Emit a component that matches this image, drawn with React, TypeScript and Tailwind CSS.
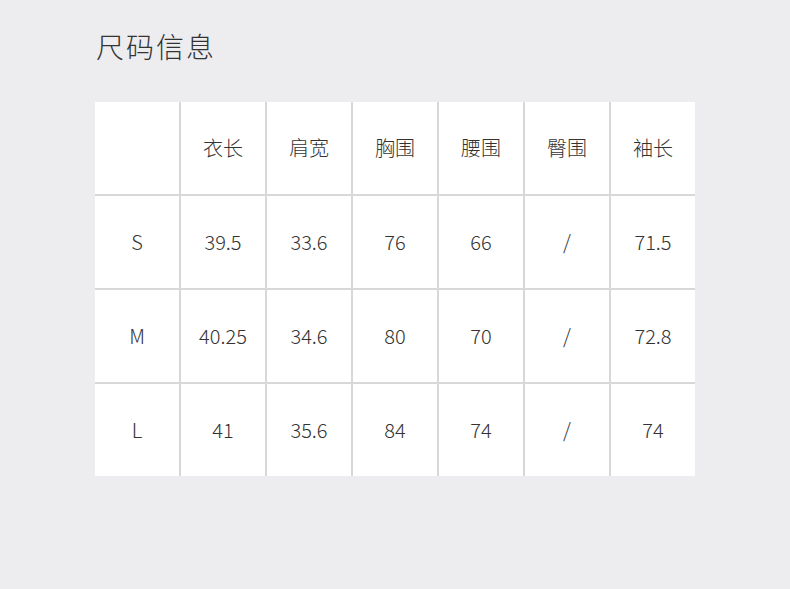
import React from "react";

const headers = ["", "衣长", "肩宽", "胸围", "腰围", "臀围", "袖长"];
const rows = [
  ["S", "39.5", "33.6", "76", "66", "/", "71.5"],
  ["M", "40.25", "34.6", "80", "70", "/", "72.8"],
  ["L", "41", "35.6", "84", "74", "/", "74"],
];

export default function App() {
  const all = [headers, ...rows];
  return (
    <div
      className="w-[790px] h-[589px] bg-[#ededef] text-[#333333]"
      style={{ fontFamily: '"Noto Sans CJK SC", "Noto Sans", sans-serif' }}
    >
      <div className="pl-[96px] pt-[28px]">
        <h1 className="text-[28px] leading-[36px] font-light tracking-[2px]">尺码信息</h1>
      </div>
      <div className="ml-[95px] mt-[38px] w-[600px] grid grid-cols-[repeat(7,84px)] grid-rows-[repeat(4,92px)] gap-[2px] bg-[#d8d8d8]">
        {all.flatMap((r, ri) =>
          r.map((c, ci) => (
            <div
              key={`${ri}-${ci}`}
              className="bg-white flex items-center justify-center text-[20px] font-light"
            >
              {c}
            </div>
          ))
        )}
      </div>
    </div>
  );
}
